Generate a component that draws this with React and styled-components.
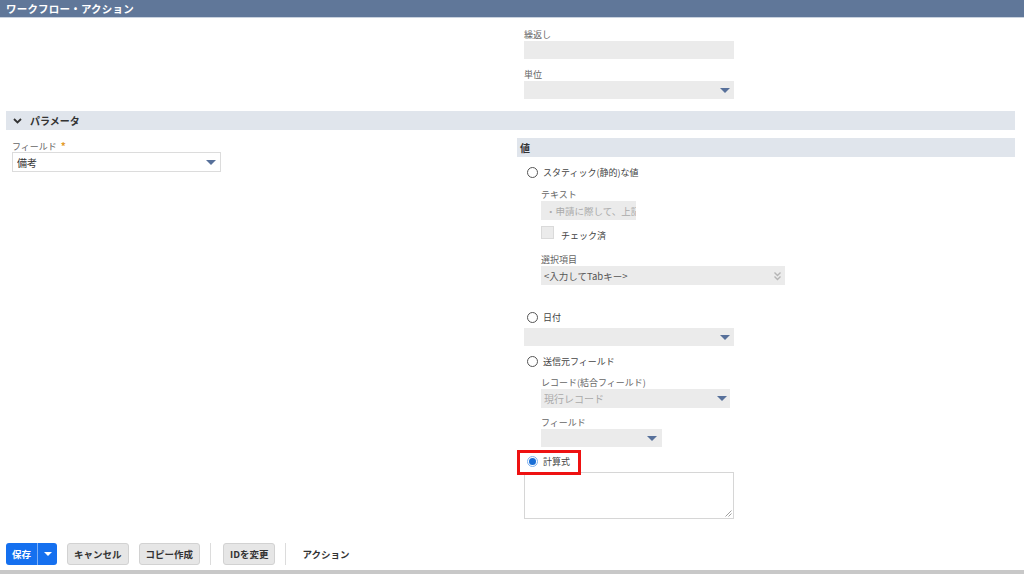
import React from "react";
import styled, { createGlobalStyle } from "styled-components";

const Global = createGlobalStyle`
  html, body { margin: 0; padding: 0; background: #fff; }
  body { font-family: "Noto Sans CJK JP", "Noto Sans", sans-serif; color: #333; }
  * { box-sizing: border-box; }
`;

const Page = styled.div`
  width: 1024px;
  height: 574px;
  display: flex;
  flex-direction: column;
  overflow: hidden;
`;

const Header = styled.div`
  height: 18px;
  background: #607799;
  border-bottom: 1px solid #c9d2df;
  color: #fff;
  font-weight: 700;
  font-size: 10.5px;
  line-height: 17px;
  padding-left: 6px;
  letter-spacing: 0.2px;
`;

const Body = styled.div`
  padding: 0 9px 0 6px;
  flex: 1;
`;

const Columns = styled.div`
  display: grid;
  grid-template-columns: 505px 1fr;
  column-gap: 6px;
`;

const TopRight = styled.div`
  padding: 11px 0 0 7px;
  display: flex;
  flex-direction: column;
  gap: 10px;
`;

const Field = styled.div`
  display: flex;
  flex-direction: column;
  margin-left: ${(p) => p.$indent || 0}px;
  margin-top: ${(p) => p.$mt || 0}px;
`;

const Label = styled.div`
  font-size: 9px;
  line-height: 12px;
  height: 12px;
  color: #666;
  white-space: nowrap;
`;

const Star = styled.span`
  color: #e39b2d;
  font-weight: 700;
  font-size: 10px;
  margin-left: 4px;
`;

const Box = styled.div`
  width: ${(p) => p.$w}px;
  height: ${(p) => p.$h || 18}px;
  background: ${(p) => (p.$white ? "#fff" : "#ebebeb")};
  border: ${(p) => (p.$white ? "1px solid #dcdcdc" : "none")};
  display: flex;
  align-items: center;
  padding: 0 ${(p) => (p.$pad ?? 4)}px;
  font-size: ${(p) => p.$fs || 9.5}px;
  color: ${(p) => p.$color || "#333"};
  overflow: hidden;
  white-space: nowrap;
  position: relative;
`;

const Value = styled.span`
  flex: 1;
  overflow: hidden;
`;

const Tri = styled.span`
  width: 0;
  height: 0;
  border-left: 5px solid transparent;
  border-right: 5px solid transparent;
  border-top: 5px solid #57709a;
  flex: none;
`;

const SectionBar = styled.div`
  height: 19px;
  background: #e0e5ec;
  display: flex;
  align-items: center;
  font-size: 10px;
  font-weight: 700;
  color: #333;
  padding-left: ${(p) => p.$pl || 4}px;
  margin-top: ${(p) => p.$mt || 0}px;
  gap: 8px;
`;

const LeftCol = styled.div`
  padding: 10px 0 0 6px;
`;

const RightCol = styled.div`
  padding-top: 8px;
  display: flex;
  flex-direction: column;
`;

const RightInner = styled.div`
  padding-left: 7px;
  display: flex;
  flex-direction: column;
`;

const RadioRow = styled.div`
  display: flex;
  align-items: center;
  gap: 5px;
  height: 14px;
  font-size: 9px;
  color: #444;
  margin-top: ${(p) => p.$mt || 0}px;
  padding-left: 3px;
  position: relative;
  align-self: flex-start;
`;

const Radio = styled.span`
  width: 11px;
  height: 11px;
  border-radius: 50%;
  border: 1px solid ${(p) => (p.$on ? "#7fb2ee" : "#555")};
  background: #fff;
  display: flex;
  align-items: center;
  justify-content: center;
  flex: none;
  &::after {
    content: "";
    display: ${(p) => (p.$on ? "block" : "none")};
    width: 7px;
    height: 7px;
    border-radius: 50%;
    background: #1a6fd6;
  }
`;

const Highlight = styled.span`
  position: absolute;
  left: -7px;
  top: -4px;
  width: 64px;
  height: 25px;
  border: 3px solid #ee1111;
  pointer-events: none;
  z-index: 2;
`;

const CheckRow = styled.div`
  display: flex;
  align-items: flex-start;
  gap: 7px;
  margin: 6px 0 0 17px;
  font-size: 9px;
  color: #444;
  height: 16px;
`;

const Check = styled.span`
  width: 13px;
  height: 13px;
  background: #ebebeb;
  border: 1px solid #dadada;
  flex: none;
`;

const CheckText = styled.span`
  line-height: 12px;
  margin-top: 4px;
`;

const TextArea = styled.div`
  width: 210px;
  height: 47px;
  border: 1px solid #d6d6d6;
  background: #fff;
  margin-top: 4px;
  position: relative;
`;

const Grip = styled.svg`
  position: absolute;
  right: 1px;
  bottom: 1px;
`;

const Footer = styled.div`
  display: flex;
  align-items: center;
  padding: 0 0 0 6px;
  height: 22px;
  margin-top: 24px;
`;

const SplitBtn = styled.div`
  display: flex;
  height: 22px;
  border-radius: 3px;
  overflow: hidden;
  background: #1570ef;
  color: #fff;
  font-size: 9.5px;
  font-weight: 700;
`;

const SplitMain = styled.div`
  width: 32px;
  display: flex;
  align-items: center;
  justify-content: center;
  border-right: 1px solid #7fb0f5;
`;

const SplitArrow = styled.div`
  width: 19px;
  display: flex;
  align-items: center;
  justify-content: center;
  span {
    border-left: 4px solid transparent;
    border-right: 4px solid transparent;
    border-top: 4px solid #fff;
  }
`;

const Btn = styled.div`
  height: 22px;
  padding: 0 6px;
  margin-left: ${(p) => p.$ml || 10}px;
  background: #e6e6e6;
  border: 1px solid #d2d2d2;
  border-radius: 3px;
  display: flex;
  align-items: center;
  font-size: 9.5px;
  font-weight: 700;
  color: #333;
  white-space: nowrap;
`;

const Sep = styled.div`
  width: 1px;
  height: 22px;
  background: #dcdcdc;
  margin-left: ${(p) => p.$ml || 10}px;
`;

const TextLink = styled.div`
  margin-left: 16px;
  font-size: 9.5px;
  font-weight: 700;
  color: #333;
`;

const BottomBar = styled.div`
  height: 4px;
  background: #c8c8c8;
  margin-top: 5px;
`;

const Chevron = () => (
  <svg width="9" height="6" viewBox="0 0 9 6">
    <path d="M1 1 L4.5 4.5 L8 1" fill="none" stroke="#333" strokeWidth="1.8" />
  </svg>
);

const DoubleChev = () => (
  <svg width="9" height="10" viewBox="0 0 9 10">
    <path d="M1.5 1.5 L4.5 4.5 L7.5 1.5 M1.5 5.5 L4.5 8.5 L7.5 5.5" fill="none" stroke="#b5b5b5" strokeWidth="1.4" />
  </svg>
);

export default function App() {
  return (
    <>
      <Global />
      <Page>
        <Header>ワークフロー・アクション</Header>
        <Body>
          <Columns>
            <div />
            <TopRight>
              <Field>
                <Label>繰返し</Label>
                <Box $w={210} />
              </Field>
              <Field>
                <Label>単位</Label>
                <Box $w={210} $pad={4}>
                  <Value />
                  <Tri />
                </Box>
              </Field>
            </TopRight>
          </Columns>
          <SectionBar $mt={12} $pl={7}>
            <Chevron />
            パラメータ
          </SectionBar>
          <Columns>
            <LeftCol>
              <Field>
                <Label>
                  フィールド<Star>*</Star>
                </Label>
                <Box $w={209} $h={20} $white $fs={10} $pad={4}>
                  <Value>備考</Value>
                  <Tri />
                </Box>
              </Field>
            </LeftCol>
            <RightCol>
              <SectionBar $pl={3}>値</SectionBar>
              <RightInner>
                <RadioRow $mt={8}>
                  <Radio />
                  スタティック(静的)な値
                </RadioRow>
                <Field $indent={17} $mt={10}>
                  <Label>テキスト</Label>
                  <Box $w={95} $h={19} $color="#aaa" $fs={9.5} $pad={5}>
                    ・申請に際して、上記
                  </Box>
                </Field>
                <CheckRow>
                  <Check />
                  <CheckText>チェック済</CheckText>
                </CheckRow>
                <Field $indent={17} $mt={12}>
                  <Label>選択項目</Label>
                  <Box $w={244} $h={19} $color="#555" $fs={9.5} $pad={3}>
                    <Value>&lt;入力してTabキー&gt;</Value>
                    <DoubleChev />
                  </Box>
                </Field>
                <RadioRow $mt={25}>
                  <Radio />
                  日付
                </RadioRow>
                <Field $mt={4}>
                  <Box $w={210} $h={18}>
                    <Value />
                    <Tri />
                  </Box>
                </Field>
                <RadioRow $mt={8}>
                  <Radio />
                  送信元フィールド
                </RadioRow>
                <Field $indent={17} $mt={9}>
                  <Label>レコード(結合フィールド)</Label>
                  <Box $w={189} $h={19} $color="#aaa" $fs={10} $pad={3}>
                    <Value>現行レコード</Value>
                    <Tri />
                  </Box>
                </Field>
                <Field $indent={17} $mt={9}>
                  <Label>フィールド</Label>
                  <Box $w={121} $h={18} $pad={5}>
                    <Value />
                    <Tri />
                  </Box>
                </Field>
                <RadioRow $mt={7}>
                  <Radio $on />
                  計算式
                  <Highlight />
                </RadioRow>
                <TextArea>
                  <Grip width="7" height="7" viewBox="0 0 7 7">
                    <path d="M6.5 0.5 L0.5 6.5 M6.5 3.5 L3.5 6.5" stroke="#888" strokeWidth="0.8" />
                  </Grip>
                </TextArea>
              </RightInner>
            </RightCol>
          </Columns>
        </Body>
        <Footer>
          <SplitBtn>
            <SplitMain>保存</SplitMain>
            <SplitArrow>
              <span />
            </SplitArrow>
          </SplitBtn>
          <Btn>キャンセル</Btn>
          <Btn>コピー作成</Btn>
          <Sep />
          <Btn $ml={12}>IDを変更</Btn>
          <Sep />
          <TextLink>アクション</TextLink>
        </Footer>
        <BottomBar />
      </Page>
    </>
  );
}
